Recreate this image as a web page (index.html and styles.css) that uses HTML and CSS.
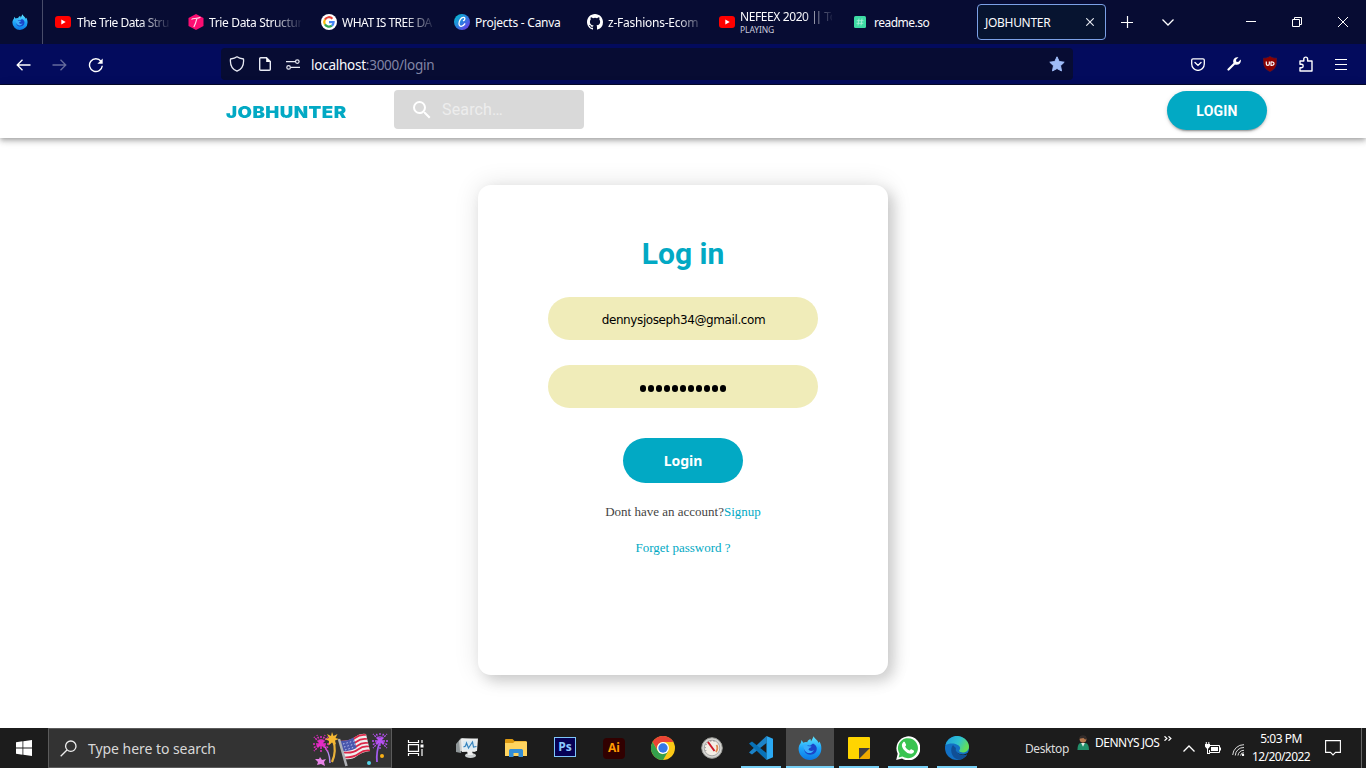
FILE: index.html
```html
<!DOCTYPE html>
<html lang="en">
<head>
<meta charset="utf-8">
<title>JOBHUNTER</title>
<link rel="stylesheet" href="styles.css">
</head>
<body>
<svg class="defs" width="0" height="0" aria-hidden="true">
  <defs>
    <linearGradient id="fx" x1="0" y1="0" x2="0" y2="1"><stop offset="0" stop-color="#5fe6ff"/><stop offset=".5" stop-color="#1fa6fa"/><stop offset="1" stop-color="#0c78e4"/></linearGradient>
    <linearGradient id="cv" x1="0" y1="0" x2="1" y2="1"><stop offset="0" stop-color="#00c4cc"/><stop offset=".5" stop-color="#2b7fe0"/><stop offset="1" stop-color="#7d2ae8"/></linearGradient>
    <linearGradient id="eg" x1="0" y1="0" x2="1" y2=".4"><stop offset="0" stop-color="#1e9be0"/><stop offset=".6" stop-color="#2fc3cf"/><stop offset="1" stop-color="#62de5a"/></linearGradient>
    <symbol id="firefox" viewBox="0 0 24 24">
      <path fill="url(#fx)" d="M3.500 4l1.800 2.800Q7 5.800 9.300 6.200C9.500 4.500 11 3.500 12.500 3L13 5.500 15.700.3C16.500 3 20 4 20.500 7L21.300 5.500C23 8 23.500 10.500 23.300 13A11.300 11 0 0 1 .6 12.800C.6 10.500 1.500 8.500 2.800 7z"/>
      <path fill="#1b45c8" d="M6.800 11.500C8 9.500 10 9 12 9.800l3-2.300c3.500 1.500 4.800 5 3 8.200-2 3.500-8 4-10.500 1C6.300 15 6 13 6.800 11.500z"/>
      <path fill="#3aaefc" d="M5.500 9.200C7 8 8.500 8.800 9.500 10l4 .5c0 1.200-2.800 1.500-3 2.800.5 1.800 3.500 2.200 5.300.7-.8 3-4.800 4-7.300 2.200C6.500 14.800 5 11.500 5.500 9.200z"/>
    </symbol>
    <symbol id="youtube" viewBox="0 0 16 12"><rect width="16" height="12" rx="3" fill="#f00"/><path fill="#fff" d="M6.300 3.500v5L10.700 6z"/></symbol>
  </defs>
</svg>

<header class="tabbar">
  <div class="pinned"><svg width="16" height="16"><use href="#firefox"/></svg></div>
  <div class="tab"><svg width="16" height="12"><use href="#youtube"/></svg><span class="label fade t1">The Trie Data Stru</span></div>
  <div class="tab"><svg width="16" height="16" viewBox="0 0 16 16"><path fill="#fb0d72" d="M8 0l7.500 4v8L8 16 .5 12V4z"/><path fill="none" stroke="#ffd5e6" stroke-width="1.200" d="M3.500 5.500C5 3.500 8 5.500 12.500 3.300M8.800 4.800C8 8 7.500 10 5.800 13"/></svg><span class="label fade t2">Trie Data Structur</span></div>
  <div class="tab"><svg width="16" height="16" viewBox="0 0 16 16"><circle cx="8" cy="8" r="8" fill="#fff"/><g fill="none" stroke-width="2.200"><path stroke="#ea4335" d="M3.900 5.600A4.700 4.700 0 0 1 11.400 4.700"/><path stroke="#fbbc05" d="M3.900 5.600a4.700 4.700 0 0 0 0 4.800"/><path stroke="#34a853" d="M3.900 10.400a4.700 4.700 0 0 0 7 1.200"/><path stroke="#4285f4" d="M10.900 11.600A4.500 4.500 0 0 0 12.600 8.200H8"/></g></svg><span class="label fade t3">WHAT IS TREE DA</span></div>
  <div class="tab"><svg width="16" height="16" viewBox="0 0 16 16"><circle cx="8" cy="8" r="8" fill="url(#cv)"/><path fill="none" stroke="#fff" stroke-width="1.300" stroke-linecap="round" d="M9.500 6.700c1.500-.5 2-3.200.2-3.400C7 3 5 7 5 9.500c0 4 4 3.400 5.800.3"/></svg><span class="label t4">Projects - Canva</span></div>
  <div class="tab"><svg width="16" height="16" viewBox="0 0 16 16"><path fill="#fff" d="M8 0C3.580 0 0 3.580 0 8c0 3.540 2.290 6.530 5.470 7.590.4.070.55-.17.55-.38 0-.19-.01-.82-.01-1.490-2.010.37-2.530-.49-2.690-.94-.09-.23-.48-.94-.82-1.130-.28-.15-.68-.52-.01-.53.63-.01 1.080.58 1.230.82.72 1.210 1.870.87 2.330.66.070-.52.280-.87.510-1.070-1.780-.2-3.640-.89-3.640-3.950 0-.87.310-1.590.82-2.150-.08-.2-.36-1.020.080-2.120 0 0 .67-.21 2.200.82a7.600 7.600 0 0 1 4 0c1.530-1.040 2.200-.82 2.200-.82.440 1.100.160 1.920.080 2.120.510.560.82 1.270.82 2.150 0 3.070-1.870 3.750-3.650 3.950.29.25.54.73.54 1.480 0 1.070-.01 1.930-.01 2.200 0 .21.150.46.55.38A8 8 0 0 0 16 8c0-4.420-3.580-8-8-8z"/></svg><span class="label fade late t5">z-Fashions-Ecom</span></div>
  <div class="tab"><svg width="16" height="12"><use href="#youtube"/></svg><div class="media"><span class="label fade t6">NEFEEX 2020 <span class="bars">||</span> To</span><span class="playing">PLAYING</span></div></div>
  <div class="tab readme"><svg width="12" height="12" viewBox="0 0 12 12"><rect width="12" height="12" rx="1.500" fill="#3edba4"/><path stroke="#a5efd5" fill="none" stroke-width=".9" d="M5 2.500l-1 7M8 2.500l-1 7M2.700 4.700h6.800M2.500 7.300h6.800"/></svg><span class="label t7">readme.so</span></div>
  <div class="tab-active"><span class="label t8">JOBHUNTER</span><svg width="8" height="8" viewBox="0 0 8 8"><path stroke="#e8ebf3" stroke-width="1.100" d="M.3.300l7.400 7.400M7.700.300L.3 7.700"/></svg></div>
  <svg class="plus" width="12" height="12" viewBox="0 0 12 12"><path stroke="#fff" stroke-width="1.200" d="M0 6.500h12M6.500 0v12"/></svg>
  <svg class="chev" width="12" height="7" viewBox="0 0 12 7"><path fill="none" stroke="#fff" stroke-width="1.300" d="M.5.500L6 6 11.500.5"/></svg>
  <svg class="min" width="10" height="10" viewBox="0 0 10 10"><path stroke="#fff" d="M0 4.500h10"/></svg>
  <svg class="restore" width="10" height="10" viewBox="0 0 10 10"><path fill="none" stroke="#fff" d="M.5 2.500h7v7h-7zM2.500 2.500v-2h7v7h-2"/></svg>
  <svg class="close" width="10" height="10" viewBox="0 0 10 10"><path stroke="#fff" d="M0 0l10 10M10 0L0 10"/></svg>
</header>

<nav class="toolbar">
  <div class="navicons">
    <svg width="15" height="12" viewBox="0 0 15 12"><path fill="none" stroke="#fff" stroke-width="1.300" d="M6.500.7L1.200 6l5.300 5.300M1.200 6H14.500"/></svg>
    <svg width="15" height="12" viewBox="0 0 15 12"><path fill="none" stroke="#656b9c" stroke-width="1.300" d="M8.500.7L13.800 6l-5.300 5.300M13.800 6H.5"/></svg>
    <svg width="16" height="16" viewBox="0 0 16 16"><path fill="none" stroke="#fff" stroke-width="1.400" d="M13 4.200A6.400 6.400 0 1 0 14.300 8.800"/><path fill="#fff" d="M14.700 1.500v5.300H9.400z"/></svg>
  </div>
  <div class="urlbar">
    <svg class="shield" width="16" height="16" viewBox="0 0 16 16"><path fill="none" stroke="#e8eaf4" stroke-width="1.300" stroke-linejoin="round" d="M8 .8c2 1.700 4 2 6.500 2.200.5 5-1 10-6.500 12.200C2.500 13 1 8 1.500 3 4 2.800 6 2.500 8 .8z"/></svg>
    <svg class="page" width="12" height="14" viewBox="0 0 12 14"><path fill="none" stroke="#e8eaf4" stroke-width="1.400" d="M1.700.7h5.800l3.800 3.800v7.800q0 1-1 1H1.700q-1 0-1-1V1.700q0-1 1-1z"/><path fill="#fff" d="M7.200.5v4.500h4.300z"/></svg>
    <svg class="perm" width="14" height="11" viewBox="0 0 14 11"><path fill="none" stroke="#e8eaf4" stroke-width="1.200" d="M0 2.600h9M5 8.400h9"/><circle cx="11.300" cy="2.600" r="1.800" fill="none" stroke="#e8eaf4" stroke-width="1.200"/><circle cx="2.600" cy="8.400" r="1.800" fill="none" stroke="#e8eaf4" stroke-width="1.200"/></svg>
    <span class="url">localhost<span class="rest">:3000/login</span></span>
    <svg class="star" width="16" height="16" viewBox="0 0 16 16"><path fill="#9fbcf8" stroke="#9fbcf8" stroke-linejoin="round" d="M8 .8l2.200 4.700 5 .7-3.700 3.500 1 5.200L8 12.500l-4.500 2.400 1-5.200L.8 6.200l5-.7z"/></svg>
  </div>
  <div class="actions">
    <svg width="14" height="13" viewBox="0 0 14 13"><path fill="none" stroke="#fff" stroke-width="1.300" d="M2 .8h10q1.300 0 1.300 1.300v4a6.300 6.300 0 0 1-12.600 0v-4Q.7.800 2 .8z"/><path fill="none" stroke="#fff" stroke-width="1.400" stroke-linecap="round" d="M4 4.500L7 7.400l3-2.900"/></svg>
    <svg width="14" height="14" viewBox="0 0 14 14"><path stroke="#fff" stroke-width="2.200" stroke-linecap="round" d="M1.500 12.500L8 6"/><path fill="#fff" d="M11.500.300L9 2.800l.3 1.900 1.900.3L13.700 2.500c1 3.500-2 6-5.200 5.200L6.300 5.500C5.500 2.300 8 -.5 11.500.3z"/></svg>
    <svg width="14" height="16" viewBox="0 0 14 16"><path fill="#8b0000" stroke="#5e1a2c" stroke-width=".6" d="M7 .4C9 1.700 11 2.200 13.700 2.200c0 7-.7 10.300-6.700 13.400C1 12.500.3 9.200.3 2.200 3 2.200 5 1.700 7 .4z"/><path fill="none" stroke="#fff" stroke-width="1.200" d="M3.300 5.500v2.500q0 1.300 1.500 1.300t1.500-1.300V5.500M8 6v3.300q3 .2 3-1.700t-3-1.600z"/></svg>
    <svg width="14" height="16" viewBox="0 0 14 16"><path fill="none" stroke="#fff" stroke-width="1.400" stroke-linejoin="round" d="M1 5h3.800V3a1.900 1.900 0 0 1 3.800 0v2H13v10H1v-3.300h1.500a1.700 1.700 0 0 0 0-3.400H1z"/></svg>
    <svg width="12" height="11" viewBox="0 0 12 11"><path stroke="#fff" stroke-width="1" d="M0 .5h12M0 5.500h12M0 10.500h12"/></svg>
  </div>
</nav>

<main class="site">
  <div class="appbar">
    <div class="brand"><span>JOBHUNTER</span></div>
    <div class="search"><svg width="24" height="24" viewBox="0 0 24 24"><path fill="#fff" d="M15.500 14h-.79l-.28-.27A6.471 6.471 0 0 0 16 9.500 6.500 6.500 0 1 0 9.500 16c1.610 0 3.090-.59 4.230-1.570l.27.28v.79l5 4.990L20.490 19l-4.990-5zm-6 0C7.010 14 5 11.990 5 9.500S7.010 5 9.500 5 14 7.010 14 9.500 11.990 14 9.500 14z"/></svg><span>Search…</span></div>
    <button class="login-top">LOGIN</button>
  </div>
  <form class="card">
    <h1>Log in</h1>
    <div class="field email"><span>dennysjoseph34@gmail.com</span></div>
    <div class="field dots"><i></i><i></i><i></i><i></i><i></i><i></i><i></i><i></i><i></i><i></i><i></i></div>
    <button class="submit" type="button">Login</button>
    <p class="signup">Dont have an account?<a>Signup</a></p>
    <p class="forgot"><a>Forget password ?</a></p>
  </form>
</main>

<footer class="taskbar">
  <div class="start"><svg width="16" height="16" viewBox="0 0 16 16"><path fill="#fff" d="M0 2.200l6.500-.9v6.300H0zM7.300 1.200L16 0v7.600H7.300zM0 8.400h6.500v6.300L0 13.800zM7.300 8.400H16V16l-8.700-1.200z"/></svg></div>
  <div class="winsearch">
    <svg width="17" height="17" viewBox="0 0 17 17"><circle cx="10.800" cy="6.200" r="5.200" fill="none" stroke="#eee" stroke-width="1.300"/><path stroke="#eee" stroke-width="1.300" d="M7 10L.7 16.300"/></svg>
    <span>Type here to search</span>
    <svg class="party" width="78" height="38" viewBox="0 0 78 38">
      <g fill="none" stroke-width="1.400"><path stroke="#b88df0" d="M10 15Q18 22 18 34"/><path stroke="#e8b23a" stroke-width="2.200" d="M21 11Q25 22 20 33"/><path stroke="#a35cf0" stroke-width="1.800" d="M68 13Q64 22 65 33"/></g>
      <path stroke="#e52bc5" stroke-width="1.500" stroke-dasharray="5 1 2 1" d="M9 15V6M9 15V24M9 15H0M9 15h9M9 15l-7-7M9 15l7-7M9 15l-7 7M9 15l7 7M9 15l-4-9M9 15l4-9M9 15l-8 4M9 15l8 4"/>
      <path fill="#f6b832" d="M20 3l1.500 4 4-2-2 4 3.500 1-4 1.500 1 4-4-2-3.500 3 .5-4.500L13 10l4-1-2-4 4 2z"/>
      <path stroke="#b950f5" stroke-width="1.300" stroke-dasharray="5 1 2 1" d="M68 12V3M68 12v9M68 12h-9M68 12h9M68 12l-7-7M68 12l7-7M68 12l-7 7M68 12l7 7M68 12l-4-8M68 12l4-8M68 12l-8 4M68 12l8 4"/>
      <path fill="#eee" d="M28 12Q38 12 43 8T54 5l4 17Q50 23 45 27t-12 3z"/>
      <path stroke="#dc2748" stroke-width="1.700" fill="none" d="M28.500 12.500Q38 13 43 9t11-3M29.500 16Q39 17 44 13t11-3M30.500 19.500Q40 21 45 17t11-3M31.500 23.500Q41 24.500 46 20.500t11-3M32.500 28.500Q42 28.500 47 24.500t11-3"/>
      <path fill="#4a57ad" d="M28 12Q36 12 41.500 8.500l3 10.500Q38 23 31 22z"/><path stroke="#b9c0ef" stroke-dasharray="1.500 2" d="M31 15l11-3M32 18l11-3M33 21l10-3"/>
      <path stroke="#aeb0b5" stroke-width="2.500" d="M27 10L34.500 37"/>
      <path fill="#e884e8" d="M8 28l2 3 4-1-2 3 1 4-4-2-4 1 1-3-3-3 4 0z"/><circle cx="57" cy="34" r="2" fill="#54d2e8"/><circle cx="70" cy="27" r="2" fill="#f9b016"/>
    </svg>
  </div>
  <div class="apps">
    <div class="app"><svg width="18" height="16" viewBox="0 0 18 16"><path fill="none" stroke="#fff" stroke-width="1.200" d="M1.500 0v2.500h10V0M1.500 16v-2.500h10V16M1.500 4.700h10v6.600h-10zM15 0v3M15 9v7"/><path fill="#fff" d="M13.500 4.500h3v3h-3z"/></svg></div>
    <div class="app"><svg width="24" height="22" viewBox="0 0 24 22"><path fill="#8f9698" d="M1 7l5-6 3 1-3 14-5-1z"/><path fill="#c9cccc" d="M4 4l3-3 15 1v11l-2 2-15-1z"/><path fill="#eceeee" d="M6 2l17-.5-1 12.500-15 1z"/><path fill="#dcebf3" d="M8 4l13-.5-.7 9L8.500 13z"/><path fill="none" stroke="#3583bd" stroke-width="1.200" d="M8.500 10l2-1 1-3 2 5 2-3 2-3 1 5 3-.5"/><ellipse cx="15.500" cy="18.500" rx="5.500" ry="2.500" fill="#ccd0d1"/><path fill="#eee" d="M12 14h5l1 4h-5z"/></svg></div>
    <div class="app"><svg width="22" height="18" viewBox="0 0 22 18"><path fill="#dc9810" d="M0 1q0-1 1-1h6.500l2 2H21v4H0z"/><path fill="#ffd45f" d="M0 4h8l2-1.500h12V17H0z"/><path fill="#348ed6" d="M4 18v-6.500q0-1.500 1.500-1.500h11q1.500 0 1.500 1.500V18h-4.500v-4h-5v4z"/></svg></div>
    <div class="app"><div class="ps">Ps</div></div>
    <div class="app"><div class="ai">Ai</div></div>
    <div class="app"><svg width="24" height="24" viewBox="0 0 24 24"><circle cx="12" cy="12" r="12" fill="#fbc816"/><path fill="#ea4335" d="M1.600 6A12 12 0 0 1 22.400 6H12a6 6 0 0 0-5.600 8z"/><path fill="#34a04c" d="M1.600 6l5.200 9A6 6 0 0 0 14 17.700L12 24A12 12 0 0 1 1.600 6z"/><path fill="#34a04c" d="M12 24l5-8.500-5 1.500z"/><circle cx="12" cy="12" r="6" fill="#fff"/><circle cx="12" cy="12" r="4.700" fill="#3478e8"/></svg></div>
    <div class="app"><svg width="22" height="22" viewBox="0 0 22 22"><circle cx="11" cy="11" r="10.300" fill="#d5d5d2" stroke="#9a9a96"/><circle cx="11" cy="11" r="7.800" fill="#f3eee6" stroke="#999" stroke-width=".8"/><path fill="none" stroke="#df8b50" stroke-width="1.800" d="M15.500 8q2 3-.5 7"/><path stroke="#777" stroke-dasharray="1 2" fill="none" d="M5 14a7 7 0 0 1 10-9"/><path stroke="#cc1727" stroke-width="2" d="M7 5l6.500 9"/></svg></div>
    <div class="app running"><svg width="24" height="24" viewBox="0 0 24 24"><path fill="#1c83c8" d="M17.500 0v7L3 18.500 0 16.500z"/><path fill="#0872b8" d="M0 7.500l3-2L17.500 17v7z"/><path fill="#2aa8f2" d="M17.500 0L24 2.700v18.600L17.500 24z"/></svg></div>
    <div class="app running current"><svg width="24" height="24"><use href="#firefox"/></svg></div>
    <div class="app running"><svg width="22" height="22" viewBox="0 0 22 22"><path fill="#ffd500" d="M1 0h20q1 0 1 1v11L12 22H1q-1 0-1-1V1q0-1 1-1z"/><path fill="#efa900" d="M11 22L22 11v10q0 1-1 1z"/><path fill="#423d3d" d="M11 11h11L11 22z"/></svg></div>
    <div class="app running"><svg width="24" height="24" viewBox="0 0 24 24"><path fill="#fff" d="M.2 24l1.500-6.200A12 12 0 1 1 6 22.500z"/><path fill="#39c451" d="M2.600 21.500l1-3.800A10 10 0 1 1 6.400 20.500z"/><path fill="#fff" d="M7.200 6.200c.5-.5 1.300-.6 1.700.1l1.200 2.500c.2.800-.6 1.200-1 1.800 1 2 2.500 3.200 4.300 4 .7-.4 1.100-1.600 1.900-1.400l2.500 1.300c.8 1-.5 3-2.300 3.300C11 18.500 5.500 12.500 5.900 8.800c.1-1 .6-2 1.300-2.600z"/></svg></div>
    <div class="app running"><svg width="24" height="24" viewBox="0 0 24 24"><circle cx="12" cy="12" r="12" fill="#1270c4"/><path fill="url(#eg)" d="M.5 9C3 1 10-.5 14 .200c6 1 10 6 10 10.500 0 4-3.500 5.800-6 5.800-3 0-4.500-1.200-3.500-2.500 2-3-1-5-4-6-4-1-8 0-10 1z"/><path fill="#104f96" d="M8 9c-3 3-3 13 6 14.800 3-.3 6-2.300 8-5C16 21 9.500 17 10.500 12z"/><path fill="#1c1c1c" d="M11 11c-2 4 2.500 8.500 8.500 7.300 2-.5 3.500-1.500 4.500-3v6l-2 1 .5-4C16 21 9 17 11 11z"/></svg></div>
  </div>
  <div class="tray">
    <span class="desk">Desktop</span>
    <svg class="person" width="12" height="16" viewBox="0 0 13 17"><circle cx="6.500" cy="4.500" r="3.600" fill="#b9794e"/><path fill="#332c2a" d="M2.500 4C2-.5 10-1.500 10.300 3L9 5 7 3z"/><path fill="#238f6a" d="M.5 16Q.5 9 4 8.500h5q4 .5 4 7.500z"/><path fill="#e6ece8" d="M4.500 8.500l2 4 2-4z"/></svg>
    <span class="user">DENNYS JOS</span>
    <svg class="more" width="8" height="5" viewBox="0 0 8 5"><path fill="none" stroke="#fff" stroke-width="1.200" d="M.5.300l2.400 2.200L.5 4.700M4.500.300l2.400 2.200-2.400 2.200"/></svg>
    <svg class="up" width="12" height="7" viewBox="0 0 12 7"><path fill="none" stroke="#fff" stroke-width="1.300" d="M.5 6.500L6 1l5.500 5.500"/></svg>
    <svg class="battery" width="16" height="12" viewBox="0 0 16 12"><path fill="none" stroke="#fff" d="M5 3.500h9.500v7h-10V8M15.500 5.500v3"/><path fill="#fff" d="M6 5h7v4H6zM0 2h5v2.500L3.500 6.500h-2L0 4.500zM.8 0h1v2h-1zM3.300 0h1v2h-1zM2 6h1v5h2v1H2z"/></svg>
    <svg class="wifi" width="13" height="12" viewBox="0 0 13 12"><g fill="none" stroke="#ddd"><path d="M.7 11A11 11 0 0 1 12 .7M3.300 11.500a8.300 8.300 0 0 1 8.700-8M6 11.500A5.700 5.700 0 0 1 12 6.300M8.500 11.500A3.200 3.200 0 0 1 12 8.800"/></g><circle cx="11" cy="11" r="1.200" fill="#fff"/></svg>
    <div class="clock"><span>5:03 PM</span><span class="date">12/20/2022</span></div>
    <svg class="note" width="16" height="16" viewBox="0 0 16 16"><path fill="none" stroke="#fff" stroke-width="1.100" d="M.6.600h14.800v11.800H10.500L8 15l-2.500-2.600H.6z"/></svg>
    <div class="peek"></div>
  </div>
</footer>
</body>
</html>
```
FILE: styles.css
```css
* { box-sizing: border-box; }
body { margin: 0; width: 1366px; height: 768px; overflow: hidden; display: flex; flex-direction: column; background: #fff; font-family: "Noto Sans", sans-serif; }
svg { display: block; flex: none; }
.defs { position: absolute; }
button { border: 0; padding: 0; }
p, h1 { margin: 0; }

/* browser tabs */
.tabbar { height: 44px; flex: none; background: #070c33; display: flex; align-items: center; color: #fbfbfe; font-size: 12px; }
.pinned { width: 43px; height: 44px; border-right: 1px solid #484c69; padding-left: 12px; display: flex; align-items: center; flex: none; }
.tab { width: 133px; height: 44px; padding-left: 12px; display: flex; align-items: center; gap: 6px; flex: none; }
.tab:nth-child(n+3) { gap: 5px; }
.tab:nth-child(n+7) { width: 132px; }
.tab:nth-child(7) { margin-left: -1px; width: 133px; }
.tab.readme { width: 137px; padding-left: 14px; gap: 8px; }
.label { display: block; white-space: nowrap; line-height: 16px; padding-top: 2px; }
.fade { width: 92px; -webkit-mask-image: linear-gradient(90deg, #000 68%, rgba(0,0,0,.08)); mask-image: linear-gradient(90deg, #000 68%, rgba(0,0,0,.08)); }
.late { -webkit-mask-image: linear-gradient(90deg, #000 74%, rgba(0,0,0,.2)); mask-image: linear-gradient(90deg, #000 74%, rgba(0,0,0,.2)); }
.t1 { letter-spacing: -.5px; }
.t2 { letter-spacing: -.35px; }
.t3 { letter-spacing: -.5px; }
.t4 { letter-spacing: -.25px; }
.t5 { letter-spacing: -.25px; }
.t6 { letter-spacing: -.4px; }
.t7 { letter-spacing: -.5px; }
.t8 { letter-spacing: -.3px; }
.bars { letter-spacing: -2.500px; margin-right: 2px; }
.media { display: flex; flex-direction: column; padding-top: 0; }
.media .label { height: 16px; line-height: 15px; padding-top: 1px; }
.playing { font-size: 8.500px; line-height: 12px; letter-spacing: -.1px; color: #c9cbdc; }
.tab-active { width: 129px; height: 36px; border: 1px solid #7ba0e6; border-radius: 4px; background: #071430; display: flex; align-items: center; justify-content: space-between; padding: 0 11px 0 7px; flex: none; }
.plus { margin-left: 15px; }
.chev { margin-left: 29px; }
.min { margin-left: 72px; }
.restore { margin-left: 36px; }
.close { margin-left: 36px; }

/* browser toolbar */
.toolbar { height: 41px; flex: none; background: #030b5d; border-bottom: 1px solid #070b2c; display: flex; align-items: center; }
.navicons { width: 221px; padding-left: 16px; display: flex; align-items: center; gap: 21px; padding-top: 1px; }
.urlbar { width: 852px; height: 32px; border-radius: 4px; background: #070c33; display: flex; align-items: center; padding-left: 8px; }
.page { margin-left: 14px; }
.perm { margin-left: 15px; }
.url { margin-left: 11px; width: 738px; font-size: 13.500px; letter-spacing: -.25px; color: #fbfbfe; padding-top: 1px; }
.rest { color: #8285a5; }
.actions { display: flex; align-items: center; gap: 22px; margin-left: 118px; }

/* site */
.site { flex: 1; display: flex; flex-direction: column; align-items: center; min-height: 0; }
.appbar { width: 100%; height: 53px; flex: none; display: flex; align-items: flex-start; box-shadow: 0 2px 4px -1px rgba(0,0,0,.2), 0 4px 5px rgba(0,0,0,.14), 0 1px 10px rgba(0,0,0,.12); }
.brand { width: 168px; margin-left: 226px; padding-top: 14px; font: 900 16.500px/26px Inter, sans-serif; letter-spacing: .4px; color: #02a9c4; }
.brand span { display: inline-block; transform: scaleX(1.13); transform-origin: left center; }
.search { width: 190px; height: 39px; margin-top: 5px; border-radius: 4px; background: #d9d9d9; display: flex; align-items: center; padding-left: 16px; gap: 8px; font: 16px/24px Roboto, sans-serif; color: #ededed; letter-spacing: .15px; }
.login-top { width: 100px; height: 39px; margin: 6px 0 0 583px; border-radius: 20px; background: #02a9c4; color: #fff; font: 700 14px Roboto, sans-serif; letter-spacing: .2px; box-shadow: 0 3px 1px -2px rgba(0,0,0,.2), 0 2px 2px rgba(0,0,0,.14), 0 1px 5px rgba(0,0,0,.12); }
.card { width: 410px; height: 490px; margin-top: 47px; flex: none; border-radius: 13px; background: #fff; box-shadow: 6px 6px 14px rgba(0,0,0,.16), 0 0 26px rgba(0,0,0,.11); display: flex; flex-direction: column; align-items: center; padding-top: 49px; }
.card h1 { font: 700 30px/40px Roboto, sans-serif; color: #02a9c4; }
.field { width: 270px; height: 43px; border-radius: 22px; background: #f0ecb9; display: flex; align-items: center; justify-content: center; }
.email { margin-top: 23px; font: 12px "DejaVu Sans", sans-serif; letter-spacing: -.4px; color: #000; padding: 2px 0 0 1px; }
.dots { margin-top: 25px; gap: 2px; padding-top: 3px; }
.dots i { width: 6px; height: 7px; border-radius: 3px; background: #000; }
.submit { width: 120px; height: 45px; margin-top: 30px; border-radius: 23px; background: #02a9c4; color: #fff; font: 700 14px "Noto Sans", sans-serif; }
.signup, .forgot { font: 13px/18px "Liberation Serif", serif; color: #444; }
.signup { margin-top: 20px; }
.forgot { margin-top: 18px; }
.card a { color: #02a9c4; }

/* taskbar */
.taskbar { height: 40px; flex: none; background: #1c1c1c; display: flex; color: #fff; }
.start { width: 48px; display: flex; align-items: center; justify-content: center; }
.winsearch { width: 344px; height: 40px; background: #333; border: 1px solid #5b5b5b; display: flex; align-items: center; padding-left: 11px; color: #d8d8d8; }
.winsearch span { margin-left: 11px; width: 224px; white-space: nowrap; font-size: 14px; letter-spacing: -.05px; }
.apps { display: flex; gap: 1px; width: 590px; }
.app { width: 48px; height: 40px; display: flex; align-items: center; justify-content: center; flex: none; position: relative; }
.app:first-child { margin-right: 2px; }
.running::after { content: ""; position: absolute; bottom: 0; left: 4px; right: 4px; height: 2px; background: #76cff5; }
.current { background: #4b4b4b; }
.current::after { left: 0; right: 0; }
.ps { width: 22px; height: 20px; margin-bottom: 2px; border: 1px solid #7ec6fa; background: #060155; color: #8ccaff; font: 700 12px/18px "Open Sans", sans-serif; text-align: center; }
.ai { width: 22px; height: 21px; border-radius: 4px; background: #310000; color: #ff9a00; font: 700 12px/20px "Open Sans", sans-serif; text-align: center; }
.tray { flex: 1; display: flex; align-items: center; font-size: 12px; white-space: nowrap; }
.desk { margin-left: 43px; width: 44px; color: #ddd; letter-spacing: -.4px; }
.person { margin: 0 0 10px 8px; }
.user { margin-left: 6px; width: 66px; padding-bottom: 11px; letter-spacing: -.5px; }
.more { margin: 0 0 20px 3px; }
.up { margin-left: 11px; }
.battery { margin-left: 10px; }
.wifi { margin: 4px 0 0 11px; }
.clock { width: 72px; display: flex; flex-direction: column; align-items: center; line-height: 18px; letter-spacing: -.5px; }
.date { letter-spacing: -.6px; }
.note { margin-left: 8px; }
.peek { width: 1px; height: 40px; margin-left: 20px; background: #666; }
```
